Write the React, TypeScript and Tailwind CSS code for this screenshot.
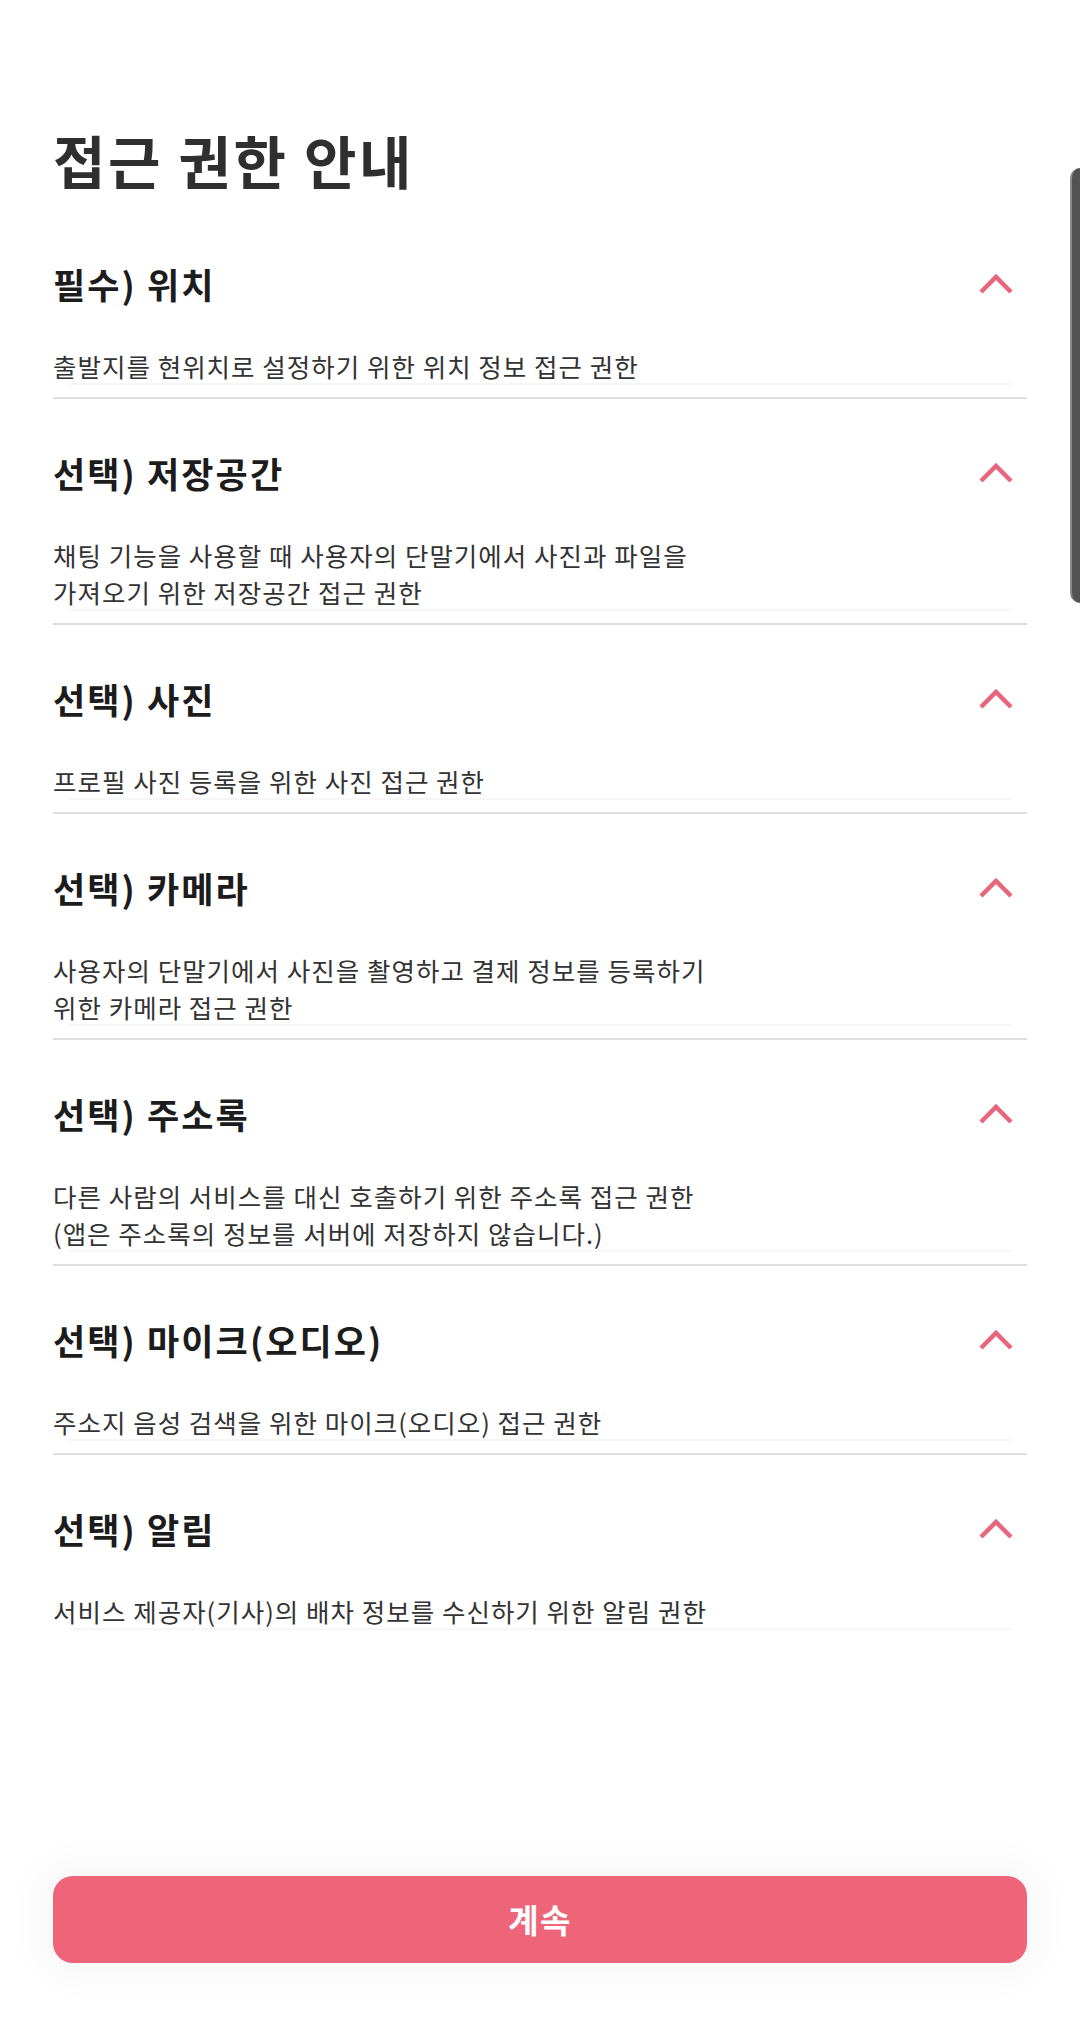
import React from "react";

type Perm = { title: string; lines: string[] };

const PERMS: Perm[] = [
  { title: "필수) 위치", lines: ["출발지를 현위치로 설정하기 위한 위치 정보 접근 권한"] },
  {
    title: "선택) 저장공간",
    lines: ["채팅 기능을 사용할 때 사용자의 단말기에서 사진과 파일을", "가져오기 위한 저장공간 접근 권한"],
  },
  { title: "선택) 사진", lines: ["프로필 사진 등록을 위한 사진 접근 권한"] },
  {
    title: "선택) 카메라",
    lines: ["사용자의 단말기에서 사진을 촬영하고 결제 정보를 등록하기", "위한 카메라 접근 권한"],
  },
  {
    title: "선택) 주소록",
    lines: ["다른 사람의 서비스를 대신 호출하기 위한 주소록 접근 권한", "(앱은 주소록의 정보를 서버에 저장하지 않습니다.)"],
  },
  { title: "선택) 마이크(오디오)", lines: ["주소지 음성 검색을 위한 마이크(오디오) 접근 권한"] },
  { title: "선택) 알림", lines: ["서비스 제공자(기사)의 배차 정보를 수신하기 위한 알림 권한"] },
];

function ChevronUp() {
  return (
    <svg width="34" height="22" viewBox="0 0 34 22" className="mr-[14px]">
      <polyline
        points="2,19 17,4 32,19"
        fill="none"
        stroke="#e8667b"
        strokeWidth="4.5"
        strokeLinejoin="miter"
      />
    </svg>
  );
}

function PermSection({ perm, last }: { perm: Perm; last: boolean }) {
  return (
    <div className="pt-[51px]">
      <div className="flex h-[46px] items-center justify-between">
        <h2 className="text-[35px] font-bold leading-[46px] tracking-[0.06em] text-[#1c1c1c]">
          {perm.title}
        </h2>
        <ChevronUp />
      </div>
      <p className="mt-[40px] text-[25.5px] leading-[37px] tracking-[0.04em] text-[#333333]">
        {perm.lines.map((l, i) => (
          <span key={i} className="block">
            {l}
          </span>
        ))}
      </p>
      <div className="mx-[16px] -mt-[1px] h-[2px] bg-[#f6f6f6]" />
      {!last && <div className="mt-[12px] h-[2px] bg-[#dedede]" />}
    </div>
  );
}

export default function App() {
  return (
    <div
      className="relative flex min-h-[2031px] w-[1080px] flex-col overflow-hidden bg-white"
      style={{ fontFamily: '"Noto Sans CJK KR", "Noto Sans", sans-serif' }}
    >
      <div className="px-[53px] pt-[126px]">
        <h1 className="mb-[18px] text-[57px] font-bold leading-[66px] tracking-[0.045em] text-[#2f2f2f]">
          접근 권한 안내
        </h1>
        {PERMS.map((p, i) => (
          <PermSection key={p.title} perm={p} last={i === PERMS.length - 1} />
        ))}
      </div>

      <div className="flex-1" />

      <div className="px-[53px] pb-[68px]">
        <button className="flex h-[87px] w-full items-center justify-center rounded-[20px] bg-[#ee657a] text-[33px] font-bold tracking-[0.04em] text-white shadow-[0_0_36px_14px_rgba(0,0,0,0.035)]">
          계속
        </button>
      </div>

      {/* scroll hint on the right edge */}
      <div className="absolute right-0 top-[168px] h-[435px] w-[10px] rounded-l-[10px] border-l-2 border-[#8a8a8a] bg-[#525252]" />
    </div>
  );
}
